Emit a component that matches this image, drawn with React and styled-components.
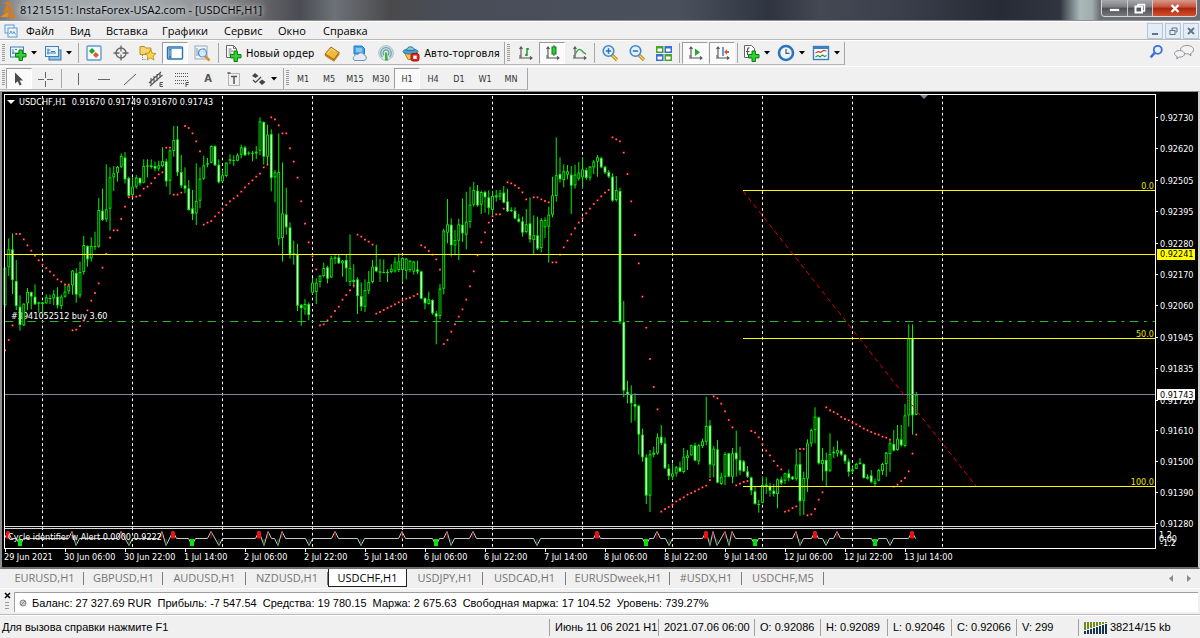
import React from "react";
import styled, { createGlobalStyle, css } from "styled-components";

const UI = `"Open Sans", "Noto Sans", sans-serif`;
const NARROW = `"Liberation Sans", Arial, sans-serif`;
const TAHOMA = `"DejaVu Sans Condensed", "DejaVu Sans", sans-serif`;

const GlobalStyle = createGlobalStyle`
  * {
    box-sizing: border-box;
  }
  body {
    margin: 0;
    background: #f0f0f0;
    font-family: ${UI};
    font-size: 11px;
    color: #000;
  }
  button {
    font: inherit;
    color: inherit;
    padding: 0;
    border: none;
    background: none;
  }
`;

const Window = styled.div`
  display: flex;
  flex-direction: column;
  min-height: 100vh;
  min-width: 960px;
`;

const TitleBar = styled.header`
  display: flex;
  height: 21px;
  border-bottom: 1px solid #8c8e91;
  padding-right: 3px;
  background: linear-gradient(
    90deg,
    #77797c 0px,
    #a3a9ad 30px,
    #a2a8ac 150px,
    #8e8f91 220px,
    #5c5c60 275px,
    #4b4d53 300px,
    #6d7178 335px,
    #4a4a4c 390px,
    #484d58 450px,
    #4a515d 680px,
    #2f3540 770px,
    #434853 820px,
    #3a3f4c 900px,
    #262b35 1000px,
    #303640 1060px,
    #a9b9b9 1080px,
    #a3adad 1092px,
    #6b6f75 1100px
  );
`;

const AppTitle = styled.h1`
  flex: 1;
  margin: 0;
  padding-left: 4px;
  font-size: 11px;
  line-height: 20px;
  font-weight: 400;
  text-shadow: 0 0 5px #dfe3e6, 0 0 6px #c9cdd0;
`;

const AppLogo = styled.svg`
  position: absolute;
  left: 0;
  top: 2px;
`;

const CaptionButtons = styled.div`
  display: flex;
  height: 17px;
  border: 1px solid #d5d5d5;
  border-top: none;
  border-radius: 0 0 4px 4px;
  overflow: hidden;
`;

const CaptionButton = styled.button`
  display: grid;
  place-items: center;
  width: ${(p) => (p.$close ? 44 : 25)}px;
  border-left: ${(p) => (p.$first ? "none" : "1px solid #c9c9cb")};
  background: ${(p) =>
    p.$close
      ? "linear-gradient(#d79a8c, #c4513a 45%, #ab2409 50%, #d0512f)"
      : "linear-gradient(#a9aaad, #7c7d80 45%, #4d4e52 50%, #77787b)"};
`;

const MenuBar = styled.nav`
  display: flex;
  align-items: center;
  height: 19px;
  padding-left: 4px;
  border-top: 1px solid #fff;
  border-bottom: 1px solid #b8b8b8;
`;

const MenuItem = styled.button`
  width: ${(p) => p.$width}px;
  padding-left: 8px;
  text-align: left;
  line-height: 16px;
`;

const MdiButtons = styled.div`
  display: flex;
  gap: 2px;
  margin-left: auto;
  padding-right: 1px;
`;

const MdiButton = styled.button`
  display: grid;
  place-items: center;
  width: 16px;
  height: 16px;
  border: 1px solid #b4c6d8;
  background: #e2edf8;
`;

const ToolRow = styled.div`
  display: flex;
  align-items: stretch;
  height: ${(p) => p.$height}px;
  padding: 1px 0;
  border-top: 1px solid #fff;
`;

const ToolBar = styled.div`
  display: flex;
  align-items: stretch;
  gap: ${(p) => p.$gap || 0}px;
  padding: 0 ${(p) => p.$end || 0}px 0 2px;
  border-right: 1px solid #a5a5a5;
  border-bottom: 1px solid #b5b5b5;
`;

const Grip = styled.span`
  width: 3px;
  margin: 2px 1px 3px 0;
  background: repeating-linear-gradient(#9a9a9a 0 1px, #f0f0f0 1px 2px);
`;

const Divider = styled.span`
  width: 1px;
  margin: 1px ${(p) => p.$side || 3}px;
  background: #a8a8a8;
`;

const ToolButton = styled.button`
  display: flex;
  align-items: center;
  justify-content: ${(p) => (p.$drop ? "flex-start" : "center")};
  gap: 4px;
  width: ${(p) => (p.$drop ? "34px" : p.$label ? "auto" : "26px")};
  padding: ${(p) => (p.$label ? "0 4px 0 2px" : p.$drop ? "0 0 0 2px" : 0)};
  font-family: ${TAHOMA};
  font-size: 11px;
  white-space: nowrap;

  ${(p) =>
    p.$on &&
    css`
      background: #fafafa;
      border: 1px solid #fff;
      border-top-color: #9c9c9c;
      border-left-color: #9c9c9c;
    `}
`;

const PeriodButton = styled(ToolButton)`
  font-size: 9px;
  color: #333;
`;

const TextToolButton = styled(ToolButton)`
  font-weight: 700;
  color: #555;
`;

const RightTools = styled.div`
  display: flex;
  align-items: center;
  gap: 9px;
  margin-left: auto;
  padding-right: 5px;
`;

const ChartFrame = styled.main`
  display: flex;
  background: #000;
  border: solid #8e8e8e;
  border-width: 1px 2px 2px;
  border-right-color: #d0d0d0;
  border-bottom-color: #6c6c6c;
`;

const Plot = styled.svg`
  flex: 1;
  min-width: 0;
  height: 475px;
  font-family: ${TAHOMA};
  font-size: 9px;
`;

const PriceAxis = styled.svg`
  width: 43px;
  height: 475px;
  font-family: ${TAHOMA};
  font-size: 9px;
`;

const TabBar = styled.div`
  display: flex;
  align-items: flex-start;
  height: 20px;
  padding-left: 5px;
  border-bottom: 1px solid #fff;
`;

const Tab = styled.button`
  position: relative;
  width: ${(p) => p.$width}px;
  height: 18px;
  line-height: 18px;
  color: #757575;

  &::after {
    content: "";
    position: absolute;
    right: 0;
    top: 3px;
    width: 1px;
    height: 13px;
    background: #7d7d7d;
  }

  ${(p) =>
    p.$active &&
    css`
      color: #000;
      background: #fff;
      border: 1px solid #222;
      border-top: none;
      &::after {
        display: none;
      }
    `}
`;

const TabScroll = styled.div`
  display: flex;
  gap: 12px;
  margin-left: auto;
  padding: 6px 9px 0 0;
`;

const Terminal = styled.section`
  display: flex;
  height: 26px;
  padding: 3px 2px 2px 2px;
  border-bottom: 1px solid #bcbcbc;
`;

const TerminalGrip = styled.div`
  display: flex;
  flex-direction: column;
  align-items: center;
  gap: 3px;
  width: 12px;
  padding-right: 2px;
`;

const Balance = styled.p`
  display: flex;
  align-items: center;
  flex: 1;
  gap: 5px;
  margin: 0;
  padding-left: 4px;
  font-family: ${NARROW};
  background: #fff;
  border: solid #9f9f9f;
  border-width: 1px 0 0 1px;
  white-space: nowrap;
`;

const StatusBar = styled.footer`
  display: flex;
  align-items: center;
  height: 23px;
  font-family: ${NARROW};
  border-top: 1px solid #fff;
`;

const Hint = styled.span`
  flex: 1;
  padding-left: 2px;
`;

const StatusCell = styled.span`
  display: flex;
  align-items: center;
  gap: 3px;
  width: ${(p) => p.$width}px;
  height: 17px;
  padding-left: 5px;
  border-left: 1px solid #a0a0a0;
  white-space: nowrap;
`;

const TitleWrap = styled.div`
  position: relative;
  display: flex;
  flex: 1;
  padding-left: 16px;
`;

/* ---------- icons ---------- */

const Icon = ({ children, size = 18 }) => (
  <svg width={size} height={size} viewBox="0 0 18 18" fill="none" aria-hidden="true">
    {children}
  </svg>
);

const Arrow = () => (
  <svg width="6" height="4" viewBox="0 0 6 4" aria-hidden="true">
    <path d="M0 0h6L3 3.5z" fill="#000" />
  </svg>
);

const PlusSign = ({ x = 6, y = 6 }) => (
  <path
    transform={`translate(${x} ${y})`}
    d="M4 0.5h3.4V4H11v3.4H7.4V11H4V7.4H0.5V4H4z"
    fill="#2fd22f"
    stroke="#0b7a12"
  />
);

const Axes = () => (
  <path
    d="M5 3v11M3 14h13M3.5 5L5 3l1.5 2M14 12.5l2 1.5-2 1.5M3 12h2"
    stroke="#555"
    strokeWidth="1.1"
  />
);

const NewChartIcon = () => (
  <Icon>
    <rect x="1.5" y="3" width="13" height="10" fill="#eaf4fc" stroke="#3f7fb5" />
    <path d="M4 5v5M3 9h8M6 5.5h2" stroke="#3f7fb5" />
    <PlusSign x={6} y={5.5} />
  </Icon>
);

const ProfilesIcon = () => (
  <Icon>
    <rect x="5" y="6" width="12" height="10" fill="#8fc0ea" stroke="#3a72a8" />
    <rect x="1.5" y="2.5" width="13" height="10" fill="#eaf4fc" stroke="#3f7fb5" />
    <path d="M4 4.5v6M3 9h9M3.5 6h3M7 7.5h4" stroke="#3f7fb5" />
  </Icon>
);

const MarketIcon = () => (
  <Icon>
    <rect x="2" y="2" width="14" height="14" rx="1" fill="#f4faff" stroke="#5f9bd1" strokeWidth="1.4" />
    <path d="M4 7L7 4l3 3-3 3z" fill="#16a51c" />
    <path d="M8 11l2.5-3 3.5 3-3 3z" fill="#e4572f" />
  </Icon>
);

const TargetIcon = () => (
  <Icon>
    <circle cx="9" cy="9" r="5" stroke="#666" strokeWidth="1.4" />
    <path d="M9 1.5v6M9 10.5v6M1.5 9h6M10.5 9h6" stroke="#666" strokeWidth="1.3" />
  </Icon>
);

const FavoritesIcon = () => (
  <Icon>
    <path d="M1 2.5h4.5l1 1.5H12v6.500H1z" fill="#f5d56c" stroke="#b98f20" />
    <path d="M3.5 11v5M3.5 15.5h4" stroke="#888" strokeDasharray="1 1" />
    <path
      d="M11.5 5.5l1.6 3.6 3.9.4-2.9 2.6.8 3.9-3.4-2-3.4 2 .8-3.9L6 9.5l3.9-.4z"
      fill="#fbd44a"
      stroke="#b3861b"
      strokeWidth=".8"
    />
  </Icon>
);

const NavigatorIcon = () => (
  <Icon>
    <rect x="1.5" y="3" width="15" height="12" rx="1" fill="#fff" stroke="#2d6faf" strokeWidth="1.4" />
    <path d="M2 4.2h14" stroke="#5c9cd6" strokeWidth="1.5" />
    <rect x="2.5" y="5" width="3" height="9.5" fill="#3f7ebd" />
    <path d="M3.5 7h1M3.5 9h1M3.5 11h1" stroke="#fff" />
  </Icon>
);

const TesterIcon = () => (
  <Icon>
    <rect x="2" y="2" width="12" height="13" fill="#f2f6fa" stroke="#96a9bb" />
    <path d="M4 4v8M6 6v6M11 4v5" stroke="#7894ad" />
    <path d="M12 12l4.5 4.5" stroke="#d19a22" strokeWidth="2.6" />
    <circle cx="9.5" cy="9" r="4" fill="#cfe6fa" fillOpacity=".8" stroke="#5a93c4" strokeWidth="1.2" />
  </Icon>
);

const SheetPlusIcon = () => (
  <Icon>
    <path d="M2.5 1.5h7l3 3v9h-10z" fill="#fff" stroke="#666" />
    <path d="M9.5 1.5v3h3M4.5 5h3M4.5 7h5M4.5 9h3M4.5 11h2" stroke="#777" />
    <PlusSign x={6} y={6.5} />
  </Icon>
);

const IndicatorsIcon = () => (
  <Icon>
    <path d="M2.5 1.5h7l3 3v9h-10z" fill="#fff" stroke="#666" />
    <path d="M7.5 4q-2-.5-2 2v5M4 7.5h3.5" stroke="#555" strokeWidth="1.2" />
    <PlusSign x={6} y={6.5} />
  </Icon>
);

const BookIcon = () => (
  <Icon>
    <path d="M2 10l6-7 8 5.5-5 7z" fill="#f0b93a" stroke="#a8700d" />
    <path d="M2 10l.5 2L11 17.2l5-6.7V8.5l-5 7z" fill="#c9851a" stroke="#a8700d" strokeWidth=".7" />
    <path d="M4.5 9.5l4-4.7 4 2.7" stroke="#fce39a" />
  </Icon>
);

const CloudIcon = () => (
  <Icon>
    <path d="M4 2h8l2.5 2.5V10H4z" fill="#3fa4ea" stroke="#2179bf" />
    <path d="M6 5h6M6 7h6" stroke="#d3ebfb" />
    <path
      d="M5 16.5h9a2.7 2.7 0 0 0 .4-5.3 3.5 3.5 0 0 0-6.4-.7 2.5 2.5 0 0 0-3.6 1.7A2.3 2.3 0 0 0 5 16.5z"
      fill="#e3ebf4"
      stroke="#7590ae"
    />
  </Icon>
);

const SignalIcon = () => (
  <Icon>
    <circle cx="9" cy="9" r="7.3" fill="#dbe7e2" stroke="#a6bcc4" />
    <path d="M5.5 13a5.3 5.3 0 1 1 7 0" stroke="#6f9fc0" strokeWidth="1.3" />
    <path d="M7 11.2a3 3 0 1 1 4 0" stroke="#5aa58a" strokeWidth="1.3" />
    <path d="M8 8.5h2l1 8H8z" fill="#3bb54a" />
  </Icon>
);

const AutoIcon = () => (
  <Icon>
    <path d="M2 8h13l-4 7.5H6z" fill="#f1c453" stroke="#b07f16" />
    <ellipse cx="8.5" cy="7.5" rx="7.5" ry="2.6" fill="#4d9fce" stroke="#2c769f" />
    <path d="M4.5 6.5C5 1.5 12 1.5 12.5 6.5z" fill="#7cc4e8" stroke="#2c769f" />
    <rect x="9" y="9.5" width="8" height="7.5" rx="2" fill="#e1251b" stroke="#a60f08" />
    <rect x="11.3" y="11.6" width="3.4" height="3.4" fill="#fff" />
  </Icon>
);

const BarsIcon = () => (
  <Icon>
    <Axes />
    <path d="M11 4v8M9 11h2M11 5h2" stroke="#1e8e2a" strokeWidth="1.4" />
  </Icon>
);

const CandleIcon = () => (
  <Icon>
    <Axes />
    <path d="M11 1v11" stroke="#0f7a18" />
    <rect x="9" y="3" width="4" height="7" fill="#2ecc3a" stroke="#0f7a18" />
  </Icon>
);

const LineIcon = () => (
  <Icon>
    <Axes />
    <path d="M5 11c2-5 4-6.5 6-5 1.5 1 2.5 3.5 5 4" stroke="#3aa245" strokeWidth="1.3" />
  </Icon>
);

const ZoomIcon = ({ plus }) => (
  <Icon>
    <path d="M11 11l5 5" stroke="#b8871c" strokeWidth="3.2" />
    <path d="M11 11l4.8 4.8" stroke="#f7d25b" strokeWidth="1.5" />
    <circle cx="7.5" cy="7" r="5.3" fill="#e3f2fd" stroke="#3f88c9" strokeWidth="1.6" />
    <path d={plus ? "M4.8 7h5.4M7.5 4.3v5.4" : "M4.8 7h5.4"} stroke="#2b6cb0" strokeWidth="1.5" />
  </Icon>
);

const ZoomInIcon = () => <ZoomIcon plus />;

const TileIcon = () => (
  <Icon>
    <rect x="1" y="2" width="7.5" height="7" fill="#46a52c" />
    <rect x="9.5" y="2" width="7.5" height="7" fill="#3a6fd0" />
    <rect x="1" y="10" width="7.5" height="7" fill="#3a6fd0" />
    <rect x="9.5" y="10" width="7.5" height="7" fill="#46a52c" />
    <path d="M2.5 6H7M11 6h4.5M2.5 14H7M11 14h4.5" stroke="#fff" strokeWidth="3" />
  </Icon>
);

const AutoScrollIcon = () => (
  <Icon>
    <Axes />
    <path d="M9 4.5l5 3.7-5 3.7z" fill="#27a836" />
  </Icon>
);

const ShiftIcon = () => (
  <Icon>
    <Axes />
    <path d="M10 3v9" stroke="#2f77b8" strokeWidth="1.4" />
    <path d="M11 8l3-2.8v1.8h2v2h-2v1.8z" fill="#d9582b" />
  </Icon>
);

const ClockIcon = () => (
  <Icon>
    <circle cx="9" cy="9" r="7" fill="#eef6fd" stroke="#2b74bb" strokeWidth="2.6" />
    <path d="M9 5v4.3h3.5" stroke="#456" strokeWidth="1.2" />
  </Icon>
);

const TemplateIcon = () => (
  <Icon>
    <rect x="1.5" y="2.5" width="15" height="13" fill="#f7fbff" stroke="#3c7fc0" strokeWidth="1.4" />
    <path d="M2 4h14" stroke="#3c7fc0" strokeWidth="2" />
    <path d="M3.5 9l3-1.5 2 1 3-2 3 .5" stroke="#c2492b" strokeWidth="1.2" />
    <path d="M3.5 13l2.5-1.5 2 1.5 2.5-2 2 1.5 2-1" stroke="#2f9a3b" strokeWidth="1.2" />
  </Icon>
);

const SearchIcon = () => (
  <Icon size={16}>
    <circle cx="11" cy="6.5" r="4.5" fill="#e9f1fe" stroke="#3a70dd" strokeWidth="2" />
    <path d="M7.5 10l-4.5 5" stroke="#3a70dd" strokeWidth="2.8" />
  </Icon>
);

const ChatIcon = () => (
  <svg width="22" height="16" viewBox="0 0 22 16" fill="none" aria-hidden="true">
    <path
      d="M14 1.5c4 0 6.5 1.8 6.5 4.2 0 1.7-1.2 3-3 3.7l.5 2.4-2.8-2c-4.5.4-7.7-1.4-7.7-4.1C7.5 3.3 10 1.5 14 1.5z"
      fill="#f3f3f5"
      stroke="#8f8f98"
    />
    <path
      d="M6.5 6.5c3 0 5 1.5 5 3.4s-2 3.3-5 3.2l-2.8 1.7.5-2.3C2.7 11.9 1.5 11 1.5 9.9c0-1.9 2-3.4 5-3.4z"
      fill="#f3f3f5"
      stroke="#8f8f98"
    />
  </svg>
);

const CursorIcon = () => (
  <Icon>
    <path d="M5 2.5v11l2.7-2.3 1.9 4.3 2-.9-1.9-4.2h3.5z" fill="#4a4a4a" />
  </Icon>
);
const CrossIcon = () => (
  <Icon>
    <path d="M9.5 2v6M9.5 11v6M2 9.5h6M11 9.5h6" stroke="#666" />
  </Icon>
);
const VLineIcon = () => (
  <Icon>
    <path d="M9.5 3v12" stroke="#666" />
  </Icon>
);
const HLineIcon = () => (
  <Icon>
    <path d="M3 9.5h12" stroke="#666" />
  </Icon>
);
const TrendIcon = () => (
  <Icon>
    <path d="M3 15L15 4" stroke="#555" />
  </Icon>
);
const ChannelIcon = () => (
  <Icon>
    <path d="M2 13L14 2M3 16L15.5 5M4 8v6M7 6v7M10 4v7M13 3v5" stroke="#555" strokeWidth="1.1" />
    <path d="M16 12.5h-3v4h3M13 14.5h2.5" stroke="#555" />
  </Icon>
);
const FiboIcon = () => (
  <Icon>
    <path d="M2 3.5h14M2 6.5h14M2 10.5h14M2 13.5h9" stroke="#555" strokeDasharray="1 1" />
    <path d="M16 12.5h-3V17M13 14.5h2.5" stroke="#555" />
  </Icon>
);
const LabelBoxIcon = () => (
  <Icon>
    <rect x="3.5" y="3.5" width="11" height="12" stroke="#777" strokeDasharray="1 1" />
    <path d="M2.5 3h3M6 6.5h6M9 6.5V14" stroke="#555" strokeWidth="1.5" />
  </Icon>
);
const ArrowsIcon = () => (
  <Icon>
    <path d="M3 6l3-3 3.5 3-3 2zM10 12l3-2.5 3.5 2.5-3.5 3z" fill="#444" />
    <path d="M4 10l2.5 2.5L12 7" stroke="#444" strokeWidth="1.2" />
  </Icon>
);

/* ---------- chart data ---------- */

// Each bar is [high, top of body, bottom of body, low, falling?] in thirds of a
// pixel below `base`.
const SERIES = [
  {
    base: -2,
    bars: `533,533,645,652 445,478,532,558 430,478,570,612,1 510,573,648,660,1 616,650,705,722,1
      640,641,706,708 594,606,640,660 605,606,620,658,1 583,620,643,645,1 635,637,641,668
      636,637,642,672 613,622,640,641 614,624,627,642 600,613,625,645 592,620,646,655,1
      614,620,648,658 580,605,620,623 583,587,604,612 540,542,586,614 535,549,614,638,1
      515,546,616,624 438,465,546,554 466,468,508,530,1 442,468,505,515 425,468,471,480
      324,360,470,473 296,362,390,392,1 223,358,388,396 232,262,356,422 228,250,262,303
      228,231,248,275 190,198,230,234 186,202,268,280,1 260,264,318,320,1 262,290,315,318
      255,263,290,296 262,264,280,287,1 208,228,278,280 208,226,230,262 208,226,231,236
      215,228,236,244,1 212,226,236,244 172,213,228,232 206,214,274,290,1 178,181,272,314
      108,150,183,200 108,148,247,258,1 195,246,287,294,1 232,286,296,310,1 270,295,360,362,1
      300,355,372,390,1 220,333,370,405 232,266,332,355 197,226,266,270 204,220,224,232
      166,168,218,220 166,168,226,228,1 208,224,277,280,1 240,256,274,276 217,218,258,262
      193,208,212,222 196,210,212,228,1 190,196,212,214 164,172,194,205 167,172,196,198,1
      184,188,190,196,1 183,188,190,214 168,185,190,207 82,94,182,196 94,96,200,224,1
      104,134,200,222 118,132,264,304,1 240,247,262,337 130,246,446,466 217,370,444,515
      293,373,412,434,1 397,412,492,506,1 452,490,493,524,1 462,494,647,663,1 642,645,654,707,1
      627,642,658,674 637,642,675,690,1 564,578,608,612 565,578,606,642 555,557,576,592
      518,534,558,562 527,532,566,580,1`,
  },
  {
    base: 18,
    bars: `438,445,502,504 436,442,446,462 434,442,460,462,1 450,452,460,500 434,450,475,516,1
      373,474,516,528 463,510,516,533 502,508,558,612,1 517,558,590,603,1 508,540,590,606
      483,516,542,552 450,470,516,520 404,470,484,487,1 446,484,488,516 448,486,489,490
      478,486,489,516,1 463,476,486,490 442,455,484,488 430,454,480,486 442,444,480,516
      444,446,482,508 450,452,480,487 452,455,485,494 452,478,485,492,1 482,484,566,568,1
      562,564,580,598,1 545,568,582,584 568,570,610,614,1 603,610,620,703,1 522,536,618,628
      356,362,536,553 267,343,368,400 325,344,406,440,1 360,390,406,436 326,343,392,450
      265,344,370,396,1 245,335,374,418 230,284,336,354 216,240,284,290 225,242,286,290,1
      242,246,284,312 242,246,262,308,1 241,262,294,314,1 242,258,300,320 240,256,262,275
      240,250,260,270 228,248,278,280,1 236,274,304,306,1 292,300,303,306 292,302,326,328,1
      312,326,335,338,1 320,334,368,380,1 297,343,366,370 262,340,388,398,1 316,376,390,434
      320,376,416,420,1 324,330,414,427 322,330,352,384 290,314,350,458 200,256,314,322
      82,196,258,275 142,192,208,218,1 163,184,210,232 165,184,194,208 168,194,227,312,1
      164,194,226,236 156,188,206,212 142,178,202,234 173,180,204,210,1 168,170,203,212
      150,155,172,192 135,142,155,200 140,144,172,175,1 168,170,188,192,1 180,186,200,204,1
      190,200,272,275,1 198,240,270,275 233,243,635,642,1 573,636,842,862,1`,
  },
  {
    base: 268,
    bars: `62,95,103,130,1 76,104,130,188,1 100,132,140,182,1 134,137,224,284,1 206,224,292,305,1
      283,292,407,432,1 270,283,407,456 260,278,284,292 220,232,280,284 195,230,250,255,1
      232,250,325,327,1 312,325,348,360,1 310,340,350,360 318,322,340,350 305,322,335,336,1
      264,290,336,340 270,286,294,330 254,256,286,287 248,256,302,304,1 252,256,304,314
      236,244,258,264 110,198,245,256 180,196,314,354,1 258,266,316,352 240,268,368,370,1
      338,350,372,375 277,282,350,376 278,280,350,352,1 264,280,350,370 212,278,298,350,1
      260,300,332,345,1 300,304,334,336,1 318,334,350,354,1 350,352,392,405,1 380,394,432,434,1
      420,432,434,458,1 350,375,428,430 352,374,380,402,1 368,378,392,410,1 372,392,402,410,1
      355,358,402,445 350,358,370,375,1 338,340,362,372 328,340,354,364,1 348,350,358,360,1
      266,314,356,362 276,312,424,467,1 335,354,422,465 238,250,356,396 206,210,250,260
      142,170,210,250 170,172,310,314,1 264,300,312,362 278,300,334,378,1 220,282,332,336
      260,275,280,294 242,270,280,290 268,272,284,288,1 282,284,304,312,1 296,304,336,350,1
      320,328,334,340 308,312,326,328 294,308,312,314 310,312,354,356,1 343,350,356,358
      330,346,366,370,1 356,364,372,378 326,330,362,364 308,312,333,345 276,278,312,350
      238,250,282,335 210,252,272,274,1 195,236,270,272 195,238,256,260,1 132,166,258,262
      -107,-65,166,200 -107,-65,166,224,1 96,104,164,166`,
  },
];

// Parabolic SAR: first bar, base, offsets in thirds of a pixel
const SAR = [
  [0, -2, "781 750 706 432 432 448 466 482 497 511 524 534 545 556 568 575 584 584 721 719 708 692 661 632 609 580 533 491 443 421 421 387 350 322 320 320 317 296 290 280 264 253 247 173 173 314 314 308 108 114 130 154 184 404 398 393 379 368 356 345 334 325 317 305 292 281 271 260 251 232 224 82 88 106 130 130 175 215 263 334 401 457 499 538"],
  [84, 18, "646 643 631 620 603 590 569 555 541 527 374 380 389 395 404 611 606 600 594 589 583 577 572 566 563 558 552 406 412 423 434 448 479 702 690 665 643 620 598 569 529 484 436 397 367 338 319 313 313 296 217 220 226 234 247 268 380 262 262 268 273 277 457 457 434 412 392 373 355 338 325 310 296 282 271 259 248 240 82 88 94 128 192 274 375 460 560 653 747 831 898"],
  [175, 268, "455 447 441 434 424 418 412 404 399 394 388 382 377 360 109 115 131 154 180 202 376 371 366 363 213 218 232 253 272 286 303 317 328 455 452 444 439 267 267 466 463 447 419 397 142 151 156 162 171 177 181 188 193 199 206 211 216 221 224 230 233 239 380 374 363 354 334 281 224"],
];

// [x, direction, strong signal?]
const CYCLES = [
  [6, 1, 1], [18, -1, 1], [70, 1], [74, -1], [119, 1], [127, -1], [160, 1], [164, -1],
  [171, 1, 1], [190, -1, 1], [209, 1], [217, -1], [257, 1, 1], [262, -1], [266, 1],
  [276, -1], [280, 1], [307, -1], [333, 1], [359, -1], [400, 1], [434, -1, 1], [445, 1],
  [449, -1], [471, 1], [535, -1], [595, 1, 1], [644, -1, 1], [655, 1], [667, -1],
  [704, 1, 1], [708, -1], [711, 1], [715, -1], [723, 1], [727, -1], [730, 1], [753, -1, 1],
  [794, 1], [798, -1], [813, 1, 1], [824, -1], [835, 1], [873, -1, 1], [888, -1], [910, 1, 1],
];

const PRICES = [
  ["0.92730", 26], ["0.92620", 57], ["0.92505", 89], ["0.92395", 120], ["0.92280", 152],
  ["0.92170", 183], ["0.92060", 214], ["0.91945", 246], ["0.91835", 277], ["0.91720", 309],
  ["0.91610", 339], ["0.91500", 370], ["0.91390", 401], ["0.91280", 432],
];

const DATES = [
  "29 Jun 2021", "30 Jun 06:00", "30 Jun 22:00", "1 Jul 14:00", "2 Jul 06:00", "2 Jul 22:00",
  "5 Jul 14:00", "6 Jul 06:00", "6 Jul 22:00", "7 Jul 14:00", "8 Jul 06:00", "8 Jul 22:00",
  "9 Jul 14:00", "12 Jul 06:00", "12 Jul 22:00", "13 Jul 14:00",
];

const BAR_STEP = 3.75;
const barX = (i) => 3 + i * BAR_STEP;

const bars = SERIES.flatMap(({ base, bars }) =>
  bars
    .trim()
    .split(/\s+/)
    .map((bar) => {
      const [high, top, bottom, low, down] = bar.split(",").map(Number);
      const y = (v) => base + v / 3;
      return { high: y(high), top: y(top), bottom: y(bottom), low: y(low), down };
    })
);

const sarDots = SAR.flatMap(([start, base, values]) =>
  values.split(" ").map((v, i) => [barX(start + i), base + v / 3])
);

const CYCLE_ZERO = 446.5;

function cyclePath() {
  let d = `M3 ${CYCLE_ZERO}`;
  CYCLES.forEach(([x, dir], i) => {
    const prev = i ? CYCLES[i - 1][0] : -20;
    const next = i < CYCLES.length - 1 ? CYCLES[i + 1][0] : 2000;
    if (x - prev > 8) d += `L${x - 3.5} ${CYCLE_ZERO}`;
    d += `L${x} ${CYCLE_ZERO - dir * 7}`;
    if (next - x > 8) d += `L${x + 3.5} ${CYCLE_ZERO}`;
  });
  return d;
}

const Candle = ({ bar, x }) => {
  const height = Math.max(bar.bottom - bar.top, 1);
  return (
    <>
      <rect x={x - 0.5} y={bar.high} width="1" height={bar.low - bar.high} fill="#00f000" />
      <rect x={x - 1.4} y={bar.top} width="2.8" height={height} fill="#00f000" />
      {height > 2 && (
        <rect
          x={x - 0.5}
          y={bar.top + 0.9}
          width="1"
          height={height - 1.8}
          fill={bar.down ? "#fff" : "#000"}
        />
      )}
    </>
  );
};

const Level = ({ y, label }) => (
  <>
    <line x1="741" x2="100%" y1={y} y2={y} stroke="#ff0" />
    <text x="100%" dx="-1" y={y - 2} textAnchor="end" fill="#e6e600">
      {label}
    </text>
  </>
);

const Chart = () => (
  <ChartFrame>
    <Plot>
      {Array.from({ length: 11 }, (_, i) => (
        <line
          key={i}
          x1={40.5 + i * 90}
          x2={40.5 + i * 90}
          y1="4"
          y2="456"
          stroke="#fff"
          strokeDasharray="2.8 2.8"
        />
      ))}
      <text x="17" y="13" fill="#fff" xmlSpace="preserve">
        {"USDCHF,H1  0.91670 0.91749 0.91670 0.91743"}
      </text>
      <path d="M5 8h8l-4 4z" fill="#fff" />
      <text x="9" y="227" fill="#fff">
        #3941052512 buy 3.60
      </text>
      <line x1="3" x2="100%" y1="229.5" y2="229.5" stroke="#2fb52f" strokeDasharray="8.4 5.6 2.8 5.7" />
      {bars.map((bar, i) => (
        <Candle key={i} bar={bar} x={barX(i)} />
      ))}
      <line x1="3" x2="100%" y1="302.5" y2="302.5" stroke="#778899" />
      {sarDots.map(([x, y]) => (
        <React.Fragment key={x}>
          <rect x={x - 1} y={y - 1} width="2" height="2" fill="#ff1e1e" />
          <rect x={x - 0.4} y={y - 0.4} width=".8" height=".8" fill="#ffd0d0" />
        </React.Fragment>
      ))}
      <line x1="3" x2="100%" y1="162.5" y2="162.5" stroke="#ff0" />
      <Level y={98.5} label="0.0" />
      <Level y={246.5} label="50.0" />
      <Level y={394.5} label="100.0" />
      <line x1="741" y1="99" x2="974" y2="394" stroke="#e00000" strokeDasharray="5 3.5" />
      <path d="M918 3h8l-4 4z" fill="#778899" />

      <rect x="2" y="434" width="100%" height="1" fill="#d8d8d8" />
      <rect x="2" y="436" width="100%" height="1" fill="#d8d8d8" />
      <path d={cyclePath() + `L914 ${CYCLE_ZERO}`} fill="none" stroke="#c8c8c8" />
      {CYCLES.map(([x, dir, strong]) => (
        <rect
          key={x}
          x={x - (strong ? 2 : 0.5)}
          y={dir > 0 ? CYCLE_ZERO - 7 : CYCLE_ZERO + 0.5}
          width={strong ? 4 : 1}
          height="7"
          fill={dir > 0 ? (strong ? "#f01010" : "#a02020") : strong ? "#00e800" : "#1c701c"}
        />
      ))}
      <text x="6" y="448" fill="#fff">
        Cycle identifier w Alert 0.0000 0.9222
      </text>

      <rect x="2" y="2" width="1" height="455" fill="#fff" />
      <rect x="2" y="2" width="100%" height="1" fill="#fff" />
      <rect x="2" y="456" width="100%" height="1" fill="#fff" />
      {DATES.map((date, i) => (
        <g key={date}>
          <rect x={3 + i * 60} y="457" width="1" height="3" fill="#fff" />
          <text x={2 + i * 60} y="468" fill="#fff">
            {date}
          </text>
        </g>
      ))}
    </Plot>
    <PriceAxis>
      <rect x="0" y="2" width="1" height="455" fill="#fff" />
      {PRICES.map(([price, y]) => (
        <g key={price} fill="#fff">
          <rect x="1" y={y - 1} width="2" height="1" />
          <text x="5" y={y + 3}>
            {price}
          </text>
        </g>
      ))}
      <rect x="2" y="157" width="38" height="11" fill="#ff0" />
      <text x="5" y="165">
        0.92241
      </text>
      <rect x="2" y="297" width="38" height="11" fill="#fff" />
      <text x="5" y="306">
        0.91743
      </text>
      <g fill="#fff">
        <text x="4" y="446">
          1.2
        </text>
        <text x="4" y="450">
          0.00
        </text>
        <text x="5" y="454">
          -1.2
        </text>
      </g>
    </PriceAxis>
  </ChartFrame>
);

/* ---------- shell ---------- */

const MENU = [
  ["Файл", 44],
  ["Вид", 36],
  ["Вставка", 56],
  ["Графики", 62],
  ["Сервис", 54],
  ["Окно", 45],
  ["Справка", 60],
];

const PERIODS = ["M1", "M5", "M15", "M30", "H1", "H4", "D1", "W1", "MN"];

const TABS = [
  ["EURUSD,H1", 79],
  ["GBPUSD,H1", 79],
  ["AUDUSD,H1", 83],
  ["NZDUSD,H1", 82],
  ["USDCHF,H1", 79],
  ["USDJPY,H1", 76],
  ["USDCAD,H1", 83],
  ["EURUSDweek,H1", 104],
  ["#USDX,H1", 72],
  ["USDCHF,M5", 82],
];

const STATUS = [
  ["Июнь 11 06 2021 H1", 109],
  ["2021.07.06 06:00", 96],
  ["O: 0.92086", 66],
  ["H: 0.92089", 67],
  ["L: 0.92046", 64],
  ["C: 0.92066", 65],
  ["V: 299", 62],
];

const Tool = ({ icon: I, label, text, ...rest }) => (
  <ToolButton aria-label={label} $label={!!text} {...rest}>
    <I />
    {text}
    {rest.$drop && <Arrow />}
  </ToolButton>
);

export default function App() {
  return (
    <Window>
      <GlobalStyle />
      <TitleBar>
        <TitleWrap>
          <AppLogo width="15" height="17" viewBox="0 0 15 17" fill="none" aria-hidden="true">
            <path d="M5 1h4l5 14h-4L7 5 4.5 11" stroke="#e07b14" strokeWidth="2" />
            <path d="M0 15l8-5v5z" fill="#f08c1e" />
          </AppLogo>
          <AppTitle>81215151: InstaForex-USA2.com - [USDCHF,H1]</AppTitle>
        </TitleWrap>
        <CaptionButtons>
          <CaptionButton $first aria-label="Свернуть">
            <svg width="11" height="9">
              <rect x="0.5" y="4.5" width="10" height="3" fill="#fff" stroke="#444" strokeWidth=".6" />
            </svg>
          </CaptionButton>
          <CaptionButton aria-label="Восстановить">
            <svg width="12" height="11" fill="none">
              <path d="M4 3V1.5h6.5V8H9" stroke="#fff" strokeWidth="1.6" />
              <rect x="1.5" y="3.5" width="6.5" height="6" stroke="#fff" strokeWidth="2" />
            </svg>
          </CaptionButton>
          <CaptionButton $close aria-label="Закрыть">
            <svg width="10" height="9">
              <path d="M1.5 1l7 7M8.5 1l-7 7" stroke="#fff" strokeWidth="2.4" />
            </svg>
          </CaptionButton>
        </CaptionButtons>
      </TitleBar>

      <MenuBar>
        <svg width="14" height="14" viewBox="0 0 14 14" fill="none" aria-hidden="true">
          <rect x="1" y="1" width="9" height="8" fill="#eef6fd" stroke="#5c98cc" />
          <rect x="4" y="4" width="9" height="9" fill="#eef6fd" stroke="#5c98cc" />
          <path d="M5.5 10l1.5-3 1.5 3 1.5-2.5 1.5 3" stroke="#5c98cc" />
        </svg>
        {MENU.map(([name, width]) => (
          <MenuItem key={name} $width={width}>
            {name}
          </MenuItem>
        ))}
        <MdiButtons>
          <MdiButton aria-label="Свернуть окно">
            <svg width="8" height="8">
              <rect x="1" y="6" width="6" height="2" fill="#5f7486" />
            </svg>
          </MdiButton>
          <MdiButton aria-label="Восстановить окно">
            <svg width="9" height="8" fill="none" stroke="#5f7486">
              <path d="M3 3V1h5v4H6.5" />
              <rect x="1" y="3.5" width="5" height="4" />
            </svg>
          </MdiButton>
          <MdiButton aria-label="Закрыть окно">
            <svg width="8" height="8">
              <path d="M1 1l6 6M7 1L1 7" stroke="#5f7486" strokeWidth="1.8" />
            </svg>
          </MdiButton>
        </MdiButtons>
      </MenuBar>

      <ToolRow $height={26}>
        <ToolBar $gap={1}>
          <Grip />
          <Tool icon={NewChartIcon} label="Новый график" $drop />
          <Tool icon={ProfilesIcon} label="Профили" $drop />
          <Divider $side={1} />
          <Tool icon={MarketIcon} label="Обзор рынка" />
          <Tool icon={TargetIcon} label="Окно данных" />
          <Tool icon={FavoritesIcon} label="Избранное" />
          <Tool icon={NavigatorIcon} label="Навигатор" $on />
          <Tool icon={TesterIcon} label="Тестер" />
          <Divider $side={2} />
          <Tool icon={SheetPlusIcon} text="Новый ордер" />
          <Tool icon={BookIcon} label="MetaEditor" />
          <Tool icon={CloudIcon} label="Облако" />
          <Tool icon={SignalIcon} label="Сигналы" />
          <Tool icon={AutoIcon} text="Авто-торговля" />
        </ToolBar>
        <ToolBar $gap={1}>
          <Grip />
          <Tool icon={BarsIcon} label="Бары" />
          <Tool icon={CandleIcon} label="Свечи" $on />
          <Tool icon={LineIcon} label="Линия" />
          <Divider $side={1} />
          <Tool icon={ZoomInIcon} label="Приблизить" />
          <Tool icon={ZoomIcon} label="Отдалить" />
          <Tool icon={TileIcon} label="Мозаика" />
          <Divider $side={1} />
          <Tool icon={AutoScrollIcon} label="Автопрокрутка" $on />
          <Tool icon={ShiftIcon} label="Сдвиг графика" $on />
          <Divider $side={1} />
          <Tool icon={IndicatorsIcon} label="Индикаторы" $drop />
          <Tool icon={ClockIcon} label="Периоды" $drop />
          <Tool icon={TemplateIcon} label="Шаблоны" $drop />
        </ToolBar>
        <RightTools>
          <button aria-label="Поиск">
            <SearchIcon />
          </button>
          <button aria-label="Чат">
            <ChatIcon />
          </button>
        </RightTools>
      </ToolRow>

      <ToolRow $height={25}>
        <ToolBar $end={2}>
          <Grip />
          <Tool icon={CursorIcon} label="Курсор" $on />
          <Tool icon={CrossIcon} label="Перекрестие" />
          <Divider />
          <Tool icon={VLineIcon} label="Вертикальная линия" />
          <Tool icon={HLineIcon} label="Горизонтальная линия" />
          <Tool icon={TrendIcon} label="Трендовая линия" />
          <Tool icon={ChannelIcon} label="Канал" />
          <Tool icon={FiboIcon} label="Фибоначчи" />
          <TextToolButton aria-label="Текст">A</TextToolButton>
          <Tool icon={LabelBoxIcon} label="Метка" />
          <Tool icon={ArrowsIcon} label="Стрелки" $drop />
        </ToolBar>
        <ToolBar $end={3}>
          <Grip />
          {PERIODS.map((p) => (
            <PeriodButton key={p} $on={p === "H1"}>
              {p}
            </PeriodButton>
          ))}
        </ToolBar>
      </ToolRow>

      <Chart />

      <TabBar>
        {TABS.map(([name, width]) => (
          <Tab key={name} $width={width} $active={name === "USDCHF,H1"}>
            {name}
          </Tab>
        ))}
        <TabScroll>
          <svg width="5" height="8">
            <path d="M4 0v7L0 3.5z" fill="#8a8a8a" />
          </svg>
          <svg width="5" height="8">
            <path d="M1 0v7l4-3.5z" fill="#8a8a8a" />
          </svg>
        </TabScroll>
      </TabBar>

      <Terminal>
        <TerminalGrip>
          <svg width="7" height="7">
            <path d="M1 1l5 5M6 1L1 6" stroke="#000" strokeWidth="1.5" />
          </svg>
          <svg width="4" height="8">
            <path d="M0 .5h4M0 3.5h4M0 6.5h4" stroke="#999" />
          </svg>
        </TerminalGrip>
        <Balance>
          <svg width="8" height="8">
            <circle cx="4" cy="4" r="3" fill="#ccc" stroke="#888" />
            <path d="M2 6l4-4" stroke="#888" />
          </svg>
          <span>
            Баланс: 27 327.69 RUR&nbsp; Прибыль: -7 547.54&nbsp; Средства: 19 780.15&nbsp; Маржа: 2
            675.63&nbsp; Свободная маржа: 17 104.52&nbsp; Уровень: 739.27%
          </span>
        </Balance>
      </Terminal>

      <StatusBar>
        <Hint>Для вызова справки нажмите F1</Hint>
        {STATUS.map(([text, width]) => (
          <StatusCell key={text} $width={width}>
            {text}
          </StatusCell>
        ))}
        <StatusCell $width={122}>
          <svg width="23" height="13" aria-hidden="true">
            {Array.from({ length: 8 }, (_, i) => (
              <React.Fragment key={i}>
                <rect x={i * 3} y="1" width="2" height={8 - i} fill="#6d8c1c" />
                <rect x={i * 3} y={10 - i} width="2" height={3 + i} fill="#17334f" />
              </React.Fragment>
            ))}
          </svg>
          38214/15 kb
        </StatusCell>
      </StatusBar>
    </Window>
  );
}
